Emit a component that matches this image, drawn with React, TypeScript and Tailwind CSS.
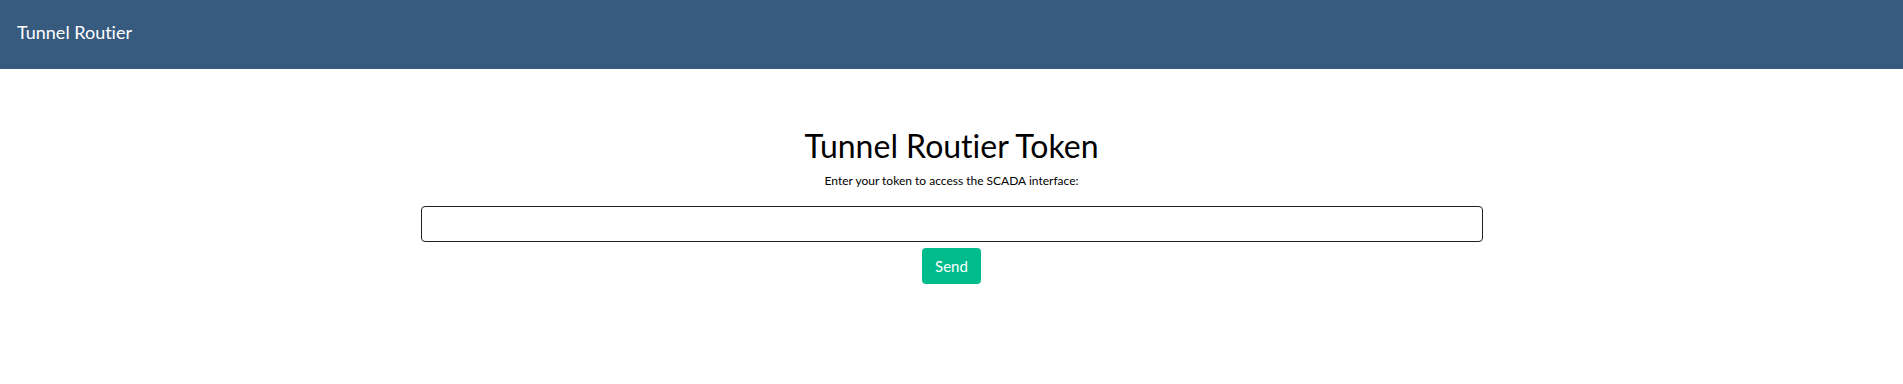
import React from "react";

export default function App() {
  return (
    <div
      className="min-h-[384px] bg-white"
      style={{ fontFamily: "Lato, 'Noto Sans', sans-serif", fontVariantLigatures: "none" }}
    >
      <header className="h-[69px] bg-[#375a7f] px-[17px] pt-[23px]">
        <span className="block text-white text-[18px] leading-[18px]">Tunnel Routier</span>
      </header>
      <main className="flex flex-col items-center pt-[58px]">
        <h1 className="text-[32px] leading-[38px] text-black">Tunnel Routier Token</h1>
        <p className="text-[12px] leading-[14px] text-black mt-[9px]">
          Enter your token to access the SCADA interface:
        </p>
        <input
          type="text"
          className="mt-[18px] w-[1062px] h-[36px] border border-[#222] rounded-[4px] px-3 outline-none"
        />
        <button className="mt-[6px] w-[59px] h-[36px] rounded-[4px] bg-[#00bc8c] text-white text-[15px] flex items-center justify-center">
          Send
        </button>
      </main>
    </div>
  );
}
